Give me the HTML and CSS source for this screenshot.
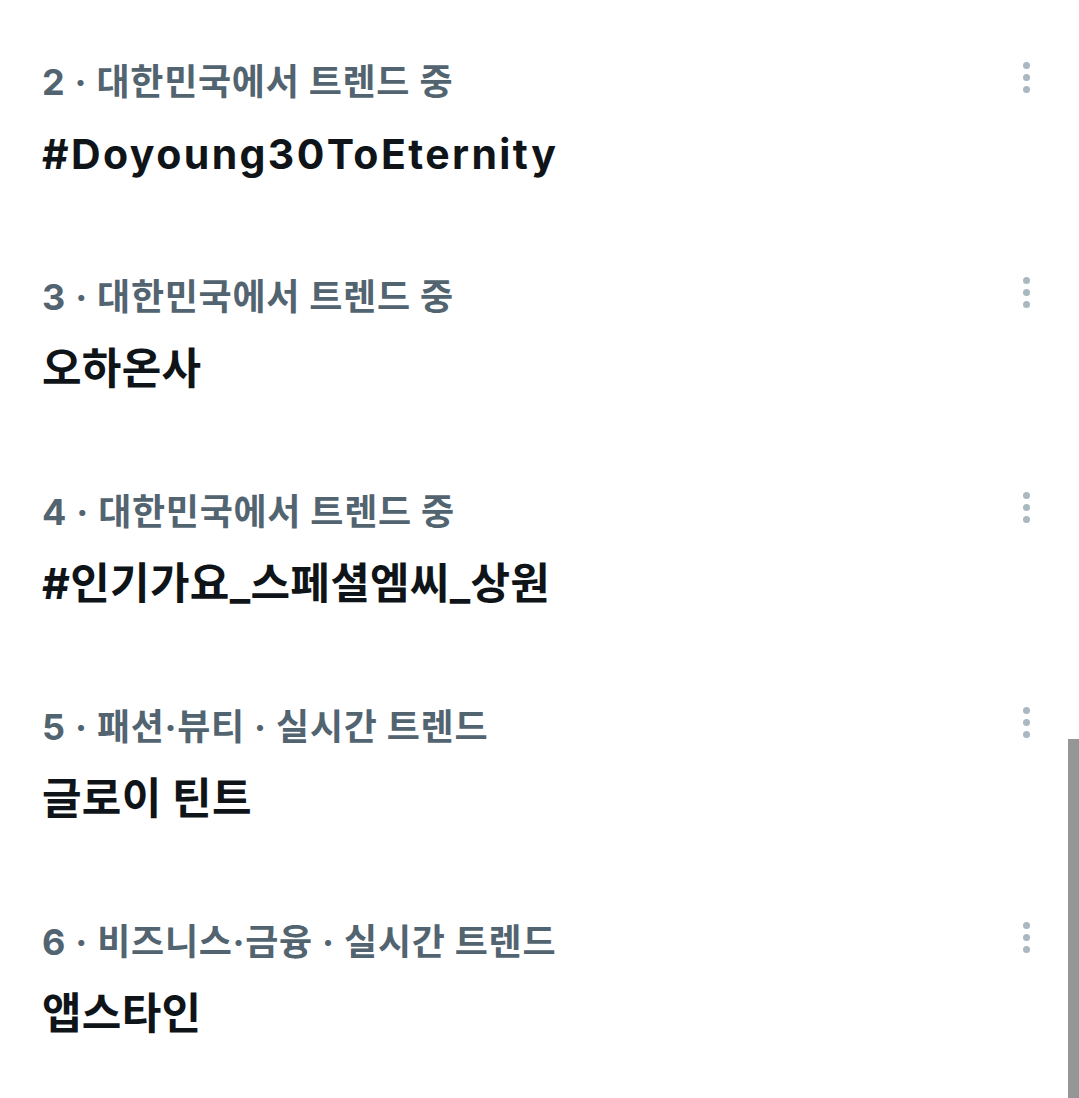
FILE: index.html
```html
<!DOCTYPE html>
<html lang="ko">
<head>
    <meta charset="UTF-8">
    <meta name="viewport" content="width=device-width, initial-scale=1.0">
    <title>트렌드</title>
    <link rel="stylesheet" href="styles.css">
</head>
<body>

    <!-- Trends list -->
    <div class="trends">
        <div class="trend">
            <div class="trend-text">
                <div class="context">2 · 대한민국에서 트렌드 중</div>
                <div class="title"><span class="latin">#Doyoung30ToEternity</span></div>
            </div>
            <div class="more"><span></span><span></span><span></span></div>
        </div>
        <div class="trend">
            <div class="trend-text">
                <div class="context">3 · 대한민국에서 트렌드 중</div>
                <div class="title">오하온사</div>
            </div>
            <div class="more"><span></span><span></span><span></span></div>
        </div>
        <div class="trend">
            <div class="trend-text">
                <div class="context">4 · 대한민국에서 트렌드 중</div>
                <div class="title">#인기가요_스페셜엠씨_상원</div>
            </div>
            <div class="more"><span></span><span></span><span></span></div>
        </div>
        <div class="trend">
            <div class="trend-text">
                <div class="context">5 · 패션·뷰티 · 실시간 트렌드</div>
                <div class="title">글로이 틴트</div>
            </div>
            <div class="more"><span></span><span></span><span></span></div>
        </div>
        <div class="trend">
            <div class="trend-text">
                <div class="context">6 · 비즈니스·금융 · 실시간 트렌드</div>
                <div class="title">앱스타인</div>
            </div>
            <div class="more"><span></span><span></span><span></span></div>
        </div>
    </div>

    <div class="scrollbar"></div>
</body>
</html>
```

FILE: styles.css
```css
body {
    font-family: Inter, "Noto Sans CJK KR", sans-serif;
    background-color: #ffffff;
    margin: 0;
    overflow: hidden;
}
.trend {
    display: flex;
    justify-content: space-between;
    align-items: flex-start;
    height: 215px;
    box-sizing: border-box;
    padding: 60px 49px 0 42px;
}
.context {
    color: #536471;
    font-size: 36px;
    font-weight: 700;
    line-height: 44px;
    letter-spacing: 0.7px;
}
.title {
    color: #0f1419;
    font-size: 43px;
    font-weight: 700;
    line-height: 56px;
    margin-top: 21px;
    letter-spacing: 0.3px;
}
.latin {
    font-size: 41px;
    letter-spacing: 2.4px;
}
.more {
    display: flex;
    flex-direction: column;
    gap: 5px;
    padding-top: 2px;
}
.more span {
    width: 7px;
    height: 7px;
    border-radius: 50%;
    background-color: #aab8c2;
}
.scrollbar {
    position: absolute;
    right: 0;
    top: 739px;
    width: 11px;
    height: 359px;
    background-color: #959696;
}
```
